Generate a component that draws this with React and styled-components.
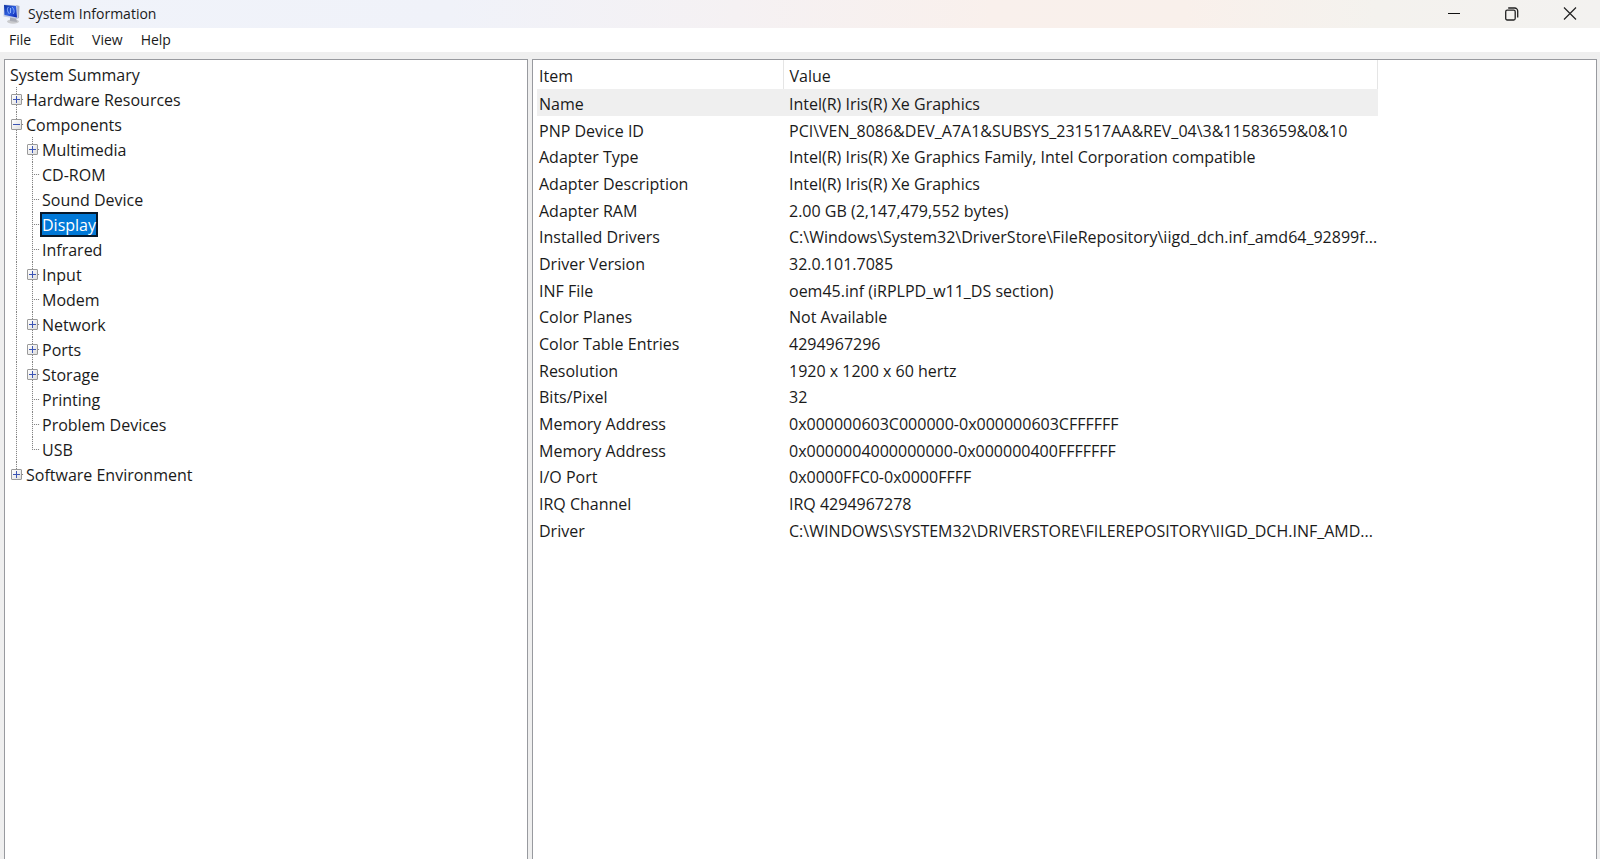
import React, { useState } from "react";
import styled, { createGlobalStyle, css } from "styled-components";

const GlobalStyle = createGlobalStyle`
  *, *::before, *::after { box-sizing: border-box; }
  body {
    margin: 0;
    background: #efefef;
    color: #1a1a1a;
    font-family: "Open Sans", "Noto Sans", sans-serif;
    font-size: 16px;
  }
  button { font: inherit; color: inherit; border: 0; background: none; padding: 0; }
`;

const Window = styled.div`
  display: flex;
  flex-direction: column;
  min-height: 100vh;
`;

const TitleBar = styled.header`
  display: flex;
  align-items: center;
  height: 28px;
  padding: 0 1px 0 3px;
  background: linear-gradient(90deg, #f0f3fa 0%, #f0f2f9 28%, #f5f1f3 46%, #f9f0ec 62%, #f9f0eb 74%, #f4f2ee 86%, #f3f2f0 100%);
`;

const Title = styled.h1`
  flex: 1;
  margin: 0 0 0 7px;
  font-size: 14px;
  line-height: 28px;
  font-weight: 400;
`;

const CaptionButton = styled.button`
  display: grid;
  place-items: center;
  width: 58px;
  height: 28px;
`;

const MenuBar = styled.nav`
  display: flex;
  height: 24px;
  background: #fff;
`;

const MenuButton = styled.button`
  padding: 0 9px;
  font-size: 14px;
  line-height: 24px;
`;

const Panes = styled.main`
  display: flex;
  flex: 1;
  gap: 4px;
  padding: 7px 3px 0 4px;
`;

const pane = css`
  background: #fff;
  border: 1px solid #989a9f;
  border-bottom: 0;
`;

const TreePane = styled.section`
  ${pane}
  width: 524px;
  padding: 2px 3px;
`;

const DetailPane = styled.section`
  ${pane}
  flex: 1;
  min-width: 0;
  padding: 0 4px;
`;

const Tree = styled.ul`
  margin: 0;
  padding: 0;
  list-style: none;
`;

const TreeRow = styled.div`
  display: flex;
  align-items: center;
  height: 25px;
`;

const vertical = "repeating-linear-gradient(180deg, #858585 0 1px, #f4f4f4 1px 2px)";
const horizontal = "repeating-linear-gradient(90deg, #858585 0 1px, #f4f4f4 1px 2px)";

const Guide = styled.span`
  display: grid;
  place-items: center;
  width: 16px;
  height: 25px;
  background-repeat: no-repeat;
  background-image: ${vertical}, ${horizontal};
  background-position: 8px 0, 8px 12px;
  background-size: 1px ${(p) => (p.$last ? "12px" : "25px")}, ${(p) => (p.$branch ? "8px 1px" : "0 0")};
`;

const Toggle = styled.button`
  display: grid;
  place-items: center;
  width: 11px;
  height: 11px;
  margin-left: 1px;
  border: 1px solid #9a9a9a;
  border-radius: 1px;
  background: linear-gradient(135deg, #fff, #dedede);
`;

const Label = styled.button`
  height: 25px;
  border: 2px solid transparent;
  line-height: 20px;
  white-space: nowrap;
  ${(p) =>
    p.$selected &&
    css`
      border-color: #06182b;
      background: #0078d7;
      color: #fff;
    `}
`;

const Grid = styled.table`
  width: 841px;
  max-width: 100%;
  table-layout: fixed;
  border-collapse: collapse;
`;

const HeadCell = styled.th`
  width: ${(p) => (p.$narrow ? "246px" : "auto")};
  height: 29px;
  padding: 3px 0 0 ${(p) => (p.$narrow ? "2px" : "6px")};
  border-right: 1px solid #e5e5e5;
  font-weight: 400;
  line-height: 24px;
  text-align: left;
`;

/* Rows repeat 27, 27, 26 so that three of them span 80px. */
const Row = styled.tr`
  height: 27px;
  background: ${(p) => (p.$active ? "#efefef" : "transparent")};
  &:nth-child(3n) { height: 26px; }
`;

const Cell = styled.td`
  padding: 2px 0 0 ${(p) => (p.$narrow ? "2px" : "6px")};
  line-height: 24px;
  white-space: nowrap;
`;

const tree = [
  { name: "Hardware Resources", children: [] },
  {
    name: "Components",
    children: [
      { name: "Multimedia", children: [] },
      { name: "CD-ROM" },
      { name: "Sound Device" },
      { name: "Display" },
      { name: "Infrared" },
      { name: "Input", children: [] },
      { name: "Modem" },
      { name: "Network", children: [] },
      { name: "Ports", children: [] },
      { name: "Storage", children: [] },
      { name: "Printing" },
      { name: "Problem Devices" },
      { name: "USB" },
    ],
  },
  { name: "Software Environment", children: [] },
];

const details = [
  ["Name", "Intel(R) Iris(R) Xe Graphics"],
  ["PNP Device ID", "PCI\\VEN_8086&DEV_A7A1&SUBSYS_231517AA&REV_04\\3&11583659&0&10"],
  ["Adapter Type", "Intel(R) Iris(R) Xe Graphics Family, Intel Corporation compatible"],
  ["Adapter Description", "Intel(R) Iris(R) Xe Graphics"],
  ["Adapter RAM", "2.00 GB (2,147,479,552 bytes)"],
  ["Installed Drivers", "C:\\Windows\\System32\\DriverStore\\FileRepository\\iigd_dch.inf_amd64_92899f..."],
  ["Driver Version", "32.0.101.7085"],
  ["INF File", "oem45.inf (iRPLPD_w11_DS section)"],
  ["Color Planes", "Not Available"],
  ["Color Table Entries", "4294967296"],
  ["Resolution", "1920 x 1200 x 60 hertz"],
  ["Bits/Pixel", "32"],
  ["Memory Address", "0x000000603C000000-0x000000603CFFFFFF"],
  ["Memory Address", "0x0000004000000000-0x000000400FFFFFFF"],
  ["I/O Port", "0x0000FFC0-0x0000FFFF"],
  ["IRQ Channel", "IRQ 4294967278"],
  ["Driver", "C:\\WINDOWS\\SYSTEM32\\DRIVERSTORE\\FILEREPOSITORY\\IIGD_DCH.INF_AMD..."],
];

function AppIcon() {
  return (
    <svg width="18" height="20" viewBox="0 0 18 20" aria-hidden="true">
      <defs>
        <linearGradient id="screen" x1="0" y1="0" x2="1" y2="1">
          <stop offset="0" stopColor="#0b2fa0" />
          <stop offset="0.5" stopColor="#2f5fe0" />
          <stop offset="1" stopColor="#0a22b0" />
        </linearGradient>
      </defs>
      <ellipse cx="10" cy="17.5" rx="6" ry="2.2" fill="#c9cacd" />
      <path d="M7 13l6 1 1 4-7-1z" fill="#a9acb5" />
      <path d="M13 1l3.500 1-.5 12-3 1z" fill="#a9b0c4" />
      <path d="M1 0.500l13 1 1 13.500L0.500 12.500z" fill="#c3cce4" />
      <path d="M1 1l12 1 1 11.500L1.500 11z" fill="url(#screen)" />
      <path d="M5.500 3c-2 2-1 5 1 7M9 3c2 2 3 5 1 7M7.500 4v5" stroke="#8fb2fb" strokeWidth="1" fill="none" />
    </svg>
  );
}

function TreeNode({ node, ancestors, last, selected, onSelect }) {
  const [open, setOpen] = useState(Boolean(node.children && node.children.length));
  return (
    <li role="treeitem" aria-selected={selected === node.name} aria-expanded={node.children ? open : undefined}>
      <TreeRow>
        {ancestors.map((key) => (
          <Guide key={key} />
        ))}
        <Guide $branch $last={last}>
          {node.children && (
            <Toggle type="button" aria-label={(open ? "Collapse " : "Expand ") + node.name} onClick={() => setOpen(!open)}>
              <svg width="9" height="9" viewBox="0 0 9 9" stroke="#3c55b4" aria-hidden="true">
                <path d={open ? "M1 4.5h7" : "M1 4.5h7M4.5 1v7"} />
              </svg>
            </Toggle>
          )}
        </Guide>
        <Label type="button" $selected={selected === node.name} onClick={() => onSelect(node.name)}>
          {node.name}
        </Label>
      </TreeRow>
      {open && node.children && node.children.length > 0 && (
        <Tree role="group">
          {node.children.map((child, i) => (
            <TreeNode
              key={child.name}
              node={child}
              ancestors={[...ancestors, node.name]}
              last={i === node.children.length - 1}
              selected={selected}
              onSelect={onSelect}
            />
          ))}
        </Tree>
      )}
    </li>
  );
}

export default function App() {
  const [selected, setSelected] = useState("Display");
  return (
    <Window>
      <GlobalStyle />
      <TitleBar>
        <AppIcon />
        <Title>System Information</Title>
        <CaptionButton type="button" aria-label="Minimize">
          <svg width="14" height="14" viewBox="0 0 14 14" stroke="#111" aria-hidden="true">
            <path d="M1 6.5h12" />
          </svg>
        </CaptionButton>
        <CaptionButton type="button" aria-label="Restore">
          <svg width="14" height="14" viewBox="0 0 14 14" fill="none" stroke="#222" strokeWidth="1.3" aria-hidden="true">
            <rect x="0.7" y="3.2" width="9.5" height="9.800" rx="1.5" />
            <path d="M3.200 1h6.500a3 3 0 0 1 3 3v6.500" />
          </svg>
        </CaptionButton>
        <CaptionButton type="button" aria-label="Close">
          <svg width="14" height="14" viewBox="0 0 14 14" stroke="#222" strokeWidth="1.2" aria-hidden="true">
            <path d="M1 0.500l12 12M13 0.500L1 12.500" />
          </svg>
        </CaptionButton>
      </TitleBar>
      <MenuBar>
        {["File", "Edit", "View", "Help"].map((item) => (
          <MenuButton type="button" key={item}>
            {item}
          </MenuButton>
        ))}
      </MenuBar>
      <Panes>
        <TreePane>
          <TreeRow>
            <Label type="button" $selected={selected === "System Summary"} onClick={() => setSelected("System Summary")}>
              System Summary
            </Label>
          </TreeRow>
          <Tree role="tree" aria-label="Categories">
            {tree.map((node, i) => (
              <TreeNode
                key={node.name}
                node={node}
                ancestors={[]}
                last={i === tree.length - 1}
                selected={selected}
                onSelect={setSelected}
              />
            ))}
          </Tree>
        </TreePane>
        <DetailPane>
          <Grid>
            <thead>
              <tr>
                <HeadCell scope="col" $narrow>Item</HeadCell>
                <HeadCell scope="col">Value</HeadCell>
              </tr>
            </thead>
            <tbody>
              {details.map(([item, value], i) => (
                <Row key={i} $active={i === 0}>
                  <Cell $narrow>{item}</Cell>
                  <Cell>{value}</Cell>
                </Row>
              ))}
            </tbody>
          </Grid>
        </DetailPane>
      </Panes>
    </Window>
  );
}
